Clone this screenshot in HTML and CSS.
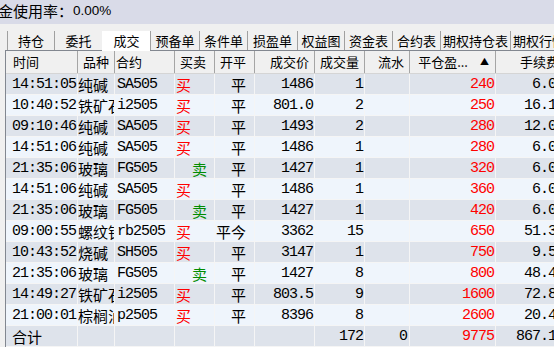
FILE: index.html
```html
<!DOCTYPE html>
<html lang="zh-CN">
<head>
<meta charset="utf-8">
<title>成交</title>
<link rel="stylesheet" href="styles.css">
</head>
<body>
<div class="status"><span class="status-text"><span class="cj">金使用率：</span><span class="pct">0.00%</span></span></div>
<div class="tabs">
  <div class="tab w47">持仓</div>
  <div class="tab w48">委托</div>
  <div class="tab w48 active">成交</div>
  <div class="tab w49">预备单</div>
  <div class="tab w48">条件单</div>
  <div class="tab w50">损盈单</div>
  <div class="tab w47">权益图</div>
  <div class="tab w48">资金表</div>
  <div class="tab w48">合约表</div>
  <div class="tab w70">期权持仓表</div>
  <div class="tab w70">期权行情表</div>
</div>
<div class="grid">
  <div class="row head">
    <div class="c c1">时间</div>
    <div class="c c2">品种</div>
    <div class="c c3">合约</div>
    <div class="c c4">买卖</div>
    <div class="c c5">开平</div>
    <div class="c c6">成交价</div>
    <div class="c c7">成交量</div>
    <div class="c c8">流水</div>
    <div class="c c9"><span>平仓盈...</span><span class="sort">▲</span></div>
    <div class="c c10">手续费</div>
  </div>
  <div class="row odd"><div class="c c1 n">14:51:05</div><div class="c c2">纯碱</div><div class="c c3 n">SA505</div><div class="c c4 buy">买</div><div class="c c5">平</div><div class="c c6 n">1486</div><div class="c c7 n">1</div><div class="c c8 n"></div><div class="c c9 n red">240</div><div class="c c10 n">6.00</div></div>
  <div class="row even"><div class="c c1 n">10:40:52</div><div class="c c2">铁矿石</div><div class="c c3 n">i2505</div><div class="c c4 buy">买</div><div class="c c5">平</div><div class="c c6 n">801.0</div><div class="c c7 n">2</div><div class="c c8 n"></div><div class="c c9 n red">250</div><div class="c c10 n">16.10</div></div>
  <div class="row odd"><div class="c c1 n">09:10:46</div><div class="c c2">纯碱</div><div class="c c3 n">SA505</div><div class="c c4 buy">买</div><div class="c c5">平</div><div class="c c6 n">1493</div><div class="c c7 n">2</div><div class="c c8 n"></div><div class="c c9 n red">280</div><div class="c c10 n">12.00</div></div>
  <div class="row even"><div class="c c1 n">14:51:06</div><div class="c c2">纯碱</div><div class="c c3 n">SA505</div><div class="c c4 buy">买</div><div class="c c5">平</div><div class="c c6 n">1486</div><div class="c c7 n">1</div><div class="c c8 n"></div><div class="c c9 n red">280</div><div class="c c10 n">6.00</div></div>
  <div class="row odd"><div class="c c1 n">21:35:06</div><div class="c c2">玻璃</div><div class="c c3 n">FG505</div><div class="c c4 sell">卖</div><div class="c c5">平</div><div class="c c6 n">1427</div><div class="c c7 n">1</div><div class="c c8 n"></div><div class="c c9 n red">320</div><div class="c c10 n">6.00</div></div>
  <div class="row even"><div class="c c1 n">14:51:06</div><div class="c c2">纯碱</div><div class="c c3 n">SA505</div><div class="c c4 buy">买</div><div class="c c5">平</div><div class="c c6 n">1486</div><div class="c c7 n">1</div><div class="c c8 n"></div><div class="c c9 n red">360</div><div class="c c10 n">6.00</div></div>
  <div class="row odd"><div class="c c1 n">21:35:06</div><div class="c c2">玻璃</div><div class="c c3 n">FG505</div><div class="c c4 sell">卖</div><div class="c c5">平</div><div class="c c6 n">1427</div><div class="c c7 n">1</div><div class="c c8 n"></div><div class="c c9 n red">420</div><div class="c c10 n">6.00</div></div>
  <div class="row even"><div class="c c1 n">09:00:55</div><div class="c c2">螺纹钢</div><div class="c c3 n">rb2505</div><div class="c c4 buy">买</div><div class="c c5">平今</div><div class="c c6 n">3362</div><div class="c c7 n">15</div><div class="c c8 n"></div><div class="c c9 n red">650</div><div class="c c10 n">51.30</div></div>
  <div class="row odd"><div class="c c1 n">10:43:52</div><div class="c c2">烧碱</div><div class="c c3 n">SH505</div><div class="c c4 buy">买</div><div class="c c5">平</div><div class="c c6 n">3147</div><div class="c c7 n">1</div><div class="c c8 n"></div><div class="c c9 n red">750</div><div class="c c10 n">9.50</div></div>
  <div class="row even"><div class="c c1 n">21:35:06</div><div class="c c2">玻璃</div><div class="c c3 n">FG505</div><div class="c c4 sell">卖</div><div class="c c5">平</div><div class="c c6 n">1427</div><div class="c c7 n">8</div><div class="c c8 n"></div><div class="c c9 n red">800</div><div class="c c10 n">48.40</div></div>
  <div class="row odd"><div class="c c1 n">14:49:27</div><div class="c c2">铁矿石</div><div class="c c3 n">i2505</div><div class="c c4 buy">买</div><div class="c c5">平</div><div class="c c6 n">803.5</div><div class="c c7 n">9</div><div class="c c8 n"></div><div class="c c9 n red">1600</div><div class="c c10 n">72.80</div></div>
  <div class="row even"><div class="c c1 n">21:00:01</div><div class="c c2">棕榈油</div><div class="c c3 n">p2505</div><div class="c c4 buy">买</div><div class="c c5">平</div><div class="c c6 n">8396</div><div class="c c7 n">8</div><div class="c c8 n"></div><div class="c c9 n red">2600</div><div class="c c10 n">20.40</div></div>
  <div class="row odd total"><div class="c c1 sum">合计</div><div class="c c2"></div><div class="c c3"></div><div class="c c4"></div><div class="c c5"></div><div class="c c6"></div><div class="c c7 n">172</div><div class="c c8 n">0</div><div class="c c9 n red">9775</div><div class="c c10 n">867.10</div></div>
</div>
</body>
</html>
```
FILE: styles.css
```css
html, body {
  margin: 0;
  padding: 0;
  width: 554px;
  height: 347px;
  overflow: hidden;
  background: #f0f0f0;
  font-family: "Noto Sans CJK SC", sans-serif;
  color: #000;
}

.status {
  height: 24px;
  background: #d9dbe8;
  display: flex;
  align-items: center;
  white-space: nowrap;
  overflow: hidden;
}
.status-text {
  margin-left: -2px;
  margin-top: -2px;
  display: flex;
  align-items: center;
}
.status .cj {
  font-size: 15px;
  line-height: 20px;
}
.status .pct {
  font-family: "Liberation Sans", sans-serif;
  font-size: 13.5px;
  line-height: 20px;
}

.tabs {
  display: flex;
  align-items: flex-start;
  margin-top: 7px;
  padding-left: 7px;
  height: 19px;
  white-space: nowrap;
}
.tab {
  flex: none;
  height: 19px;
  line-height: 19px;
  font-size: 13px;
  text-align: center;
  border-left: 1px solid #a0a0a0;
  box-sizing: border-box;
  overflow: hidden;
}
.tab.active {
  background: #fff;
  height: 20px;
  position: relative;
  z-index: 1;
  border-left: 1px solid #fff;
}
.w47 { width: 47px; }
.w48 { width: 48px; }
.w49 { width: 49px; }
.w50 { width: 50px; }
.w70 { width: 70px; }

.grid {
  margin-left: 5px;
  border-left: 1px solid #828790;
  border-top: 1px solid #828790;
  width: 600px;
}

.row {
  display: grid;
  grid-template-columns: 72px 37px 60px 40px 40px 60px 50px 45px 86px 72px;
  height: 21px;
  box-sizing: border-box;
  border-bottom: 1px solid #f5f5f5;
}
.row.head {
  height: 23px;
  background: #f0f0f0;
  border-bottom: 1px solid #d5d5d5;
}
.row.odd { background: #dee3eb; }
.row.even { background: #eff5fc; }

.c {
  box-sizing: border-box;
  border-right: 1px solid #f5f5f5;
  overflow: hidden;
  white-space: nowrap;
  font-size: 15px;
  line-height: 20px;
  padding-top: 1px;
}
.head .c {
  border-right: 1px solid #a5a5a5;
  font-size: 13px;
  line-height: 22px;
  padding-top: 0;
}

.n {
  font-family: "Liberation Mono", monospace;
  font-size: 15px;
  letter-spacing: -1px;
  text-align: right;
}

/* data column alignment */
.c1 { padding-left: 6px; text-align: left; }
.c2 { padding-left: 0; }
.c3 { padding-left: 2px; text-align: left; }
.c4 { padding-left: 1px; }
.c4.sell { padding-left: 17px; }
.c5 { text-align: right; padding-right: 8px; }
.c6 { padding-right: 1px; }
.c7 { padding-right: 1px; }
.c8 { padding-right: 2px; }
.c9 { padding-right: 1px; }
.c10 { padding-right: 3px; }

.buy { color: #ff0000; }
.sell { color: #008c00; }
.red { color: #ff0000; }

.sum { font-family: "Noto Sans CJK SC", sans-serif; padding-left: 6px; }

/* header alignment */
.head .c1 { padding-left: 7px; }
.head .c2 { padding-left: 5px; }
.head .c3 { padding-left: 1px; }
.head .c4 { padding-left: 5px; }
.head .c5 { padding-left: 5px; text-align: left; padding-right: 0; }
.head .c6 { text-align: right; padding-right: 5px; }
.head .c7 { text-align: right; padding-right: 5px; }
.head .c8 { text-align: right; padding-right: 5px; }
.head .c9 {
  display: flex;
  justify-content: flex-end;
  padding-right: 6px;
}
.head .c9 .sort {
  font-size: 9px;
  margin-left: 12px;
}
.head .c10 { padding-left: 24px; }
```
